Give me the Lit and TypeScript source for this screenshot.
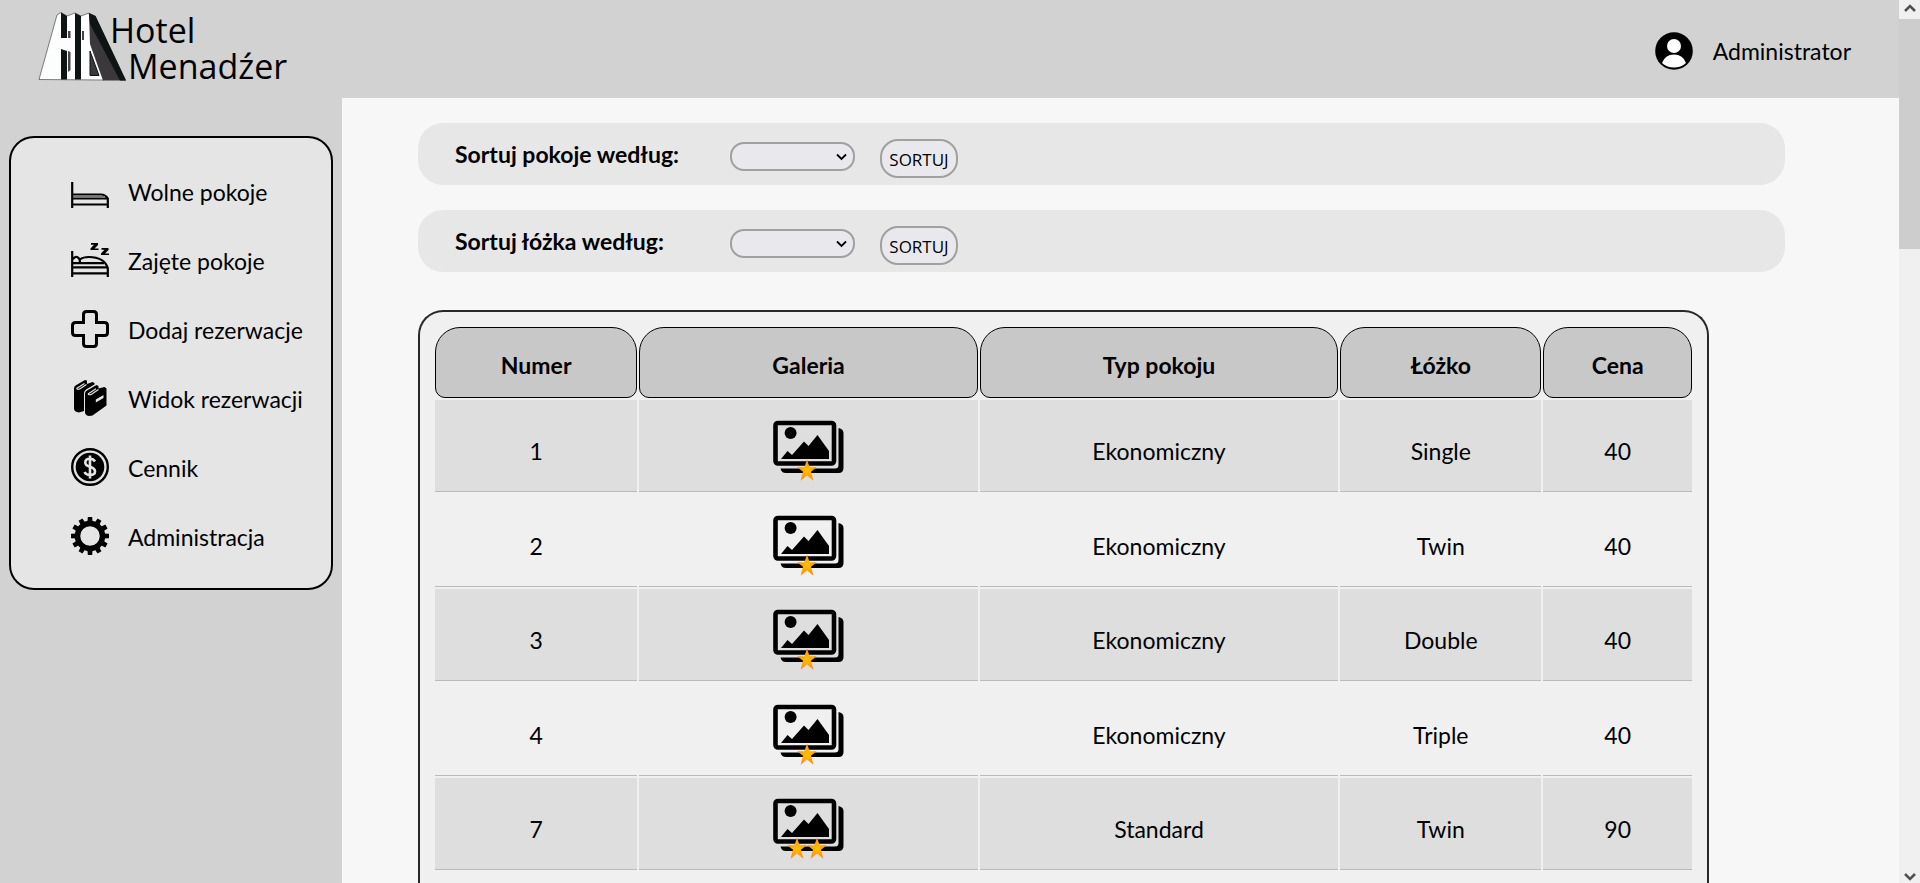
import { LitElement, html, css, svg } from "lit";
import { customElement } from "lit/decorators.js";

interface Room {
  number: number;
  type: string;
  bed: string;
  price: number;
  stars: number;
}

const ROOMS: Room[] = [
  { number: 1, type: "Ekonomiczny", bed: "Single", price: 40, stars: 1 },
  { number: 2, type: "Ekonomiczny", bed: "Twin", price: 40, stars: 1 },
  { number: 3, type: "Ekonomiczny", bed: "Double", price: 40, stars: 1 },
  { number: 4, type: "Ekonomiczny", bed: "Triple", price: 40, stars: 1 },
  { number: 7, type: "Standard", bed: "Twin", price: 90, stars: 2 },
];

const bedIcon = svg`
  <path d="M1.2 10V36M1.2 22.500H30Q34.500 22.500 36.800 26.500V36M1.2 26.500H36.800M1.2 32.500H36.800" fill="none" stroke="#000" stroke-width="2.200"/>
  <path d="M2 24.500H34" stroke="#777" stroke-width="1"/>`;

const sleepIcon = svg`
  <path d="M1.2 10V36M1.2 22.200H33M1.2 26.300H36.800M1.2 32.300H36.800M36.800 36V27Q33 16 18 16Q12 16 9 18.500M2 18Q5 14 8 17.500Q9.500 19.500 8.500 22" fill="none" stroke="#000" stroke-width="2.200"/>
  <path d="M20 2H27V4L23.500 7.500H27.500V9H19.500V7.500L23 3.800H20ZM30.500 7H37.500V9L34 12.500H38V14H30V12.500L33.500 8.800H30.500Z"/>`;

const plusIcon = svg`
  <path d="M15.500 1.500H22.500Q25.500 1.500 25.500 4.500V12.500H33.500Q36.500 12.500 36.500 15.500V22.500Q36.500 25.500 33.500 25.500H25.500V33.500Q25.500 36.500 22.500 36.500H15.500Q12.500 36.500 12.500 33.500V25.500H4.500Q1.500 25.500 1.500 22.500V15.500Q1.500 12.500 4.500 12.500H12.500V4.500Q12.500 1.500 15.500 1.500Z" fill="none" stroke="#000" stroke-width="3"/>`;

const booksIcon = svg`
  <path d="M3 9Q3 7.500 4.500 6.500L14 1L16 1.500V5L21.500 3L23.500 4V5.500L15 10.500Q13 12 13 14V32L8 33.500Q3 33 3 29.500Z"/>
  <path d="M14 14.500Q14 12.500 16 11.500L25.500 6L27.500 7V9.500L33.500 8L35.500 9.500V26.500L21.500 36.500Q14.500 38 14 33.500Z"/>
  <path d="M5.500 9.500Q7 10.800 9 9.800L15.500 5.500M5.500 9.500L13.500 4.500M17 15Q18.500 16.300 20.500 15.300L27.500 10.500M17 15L25 9.800" fill="none" stroke="#e5e5e5" stroke-width="1.200"/>
  <path d="M24.800 20.500L32.500 16V19L24.800 23.500Z" fill="#e5e5e5"/>`;

const coinIcon = svg`
  <circle cx="19" cy="19" r="17.800" fill="none" stroke="#000" stroke-width="2.400"/>
  <circle cx="19" cy="19" r="14.300"/>
  <path d="M24 13.500Q22.500 10.800 19 10.800Q14.300 10.800 14.300 14.500Q14.300 17.500 19 18.800Q24 20.300 24 23.500Q24 27 19 27Q15 27 13.500 24M19 7.500V30.500" fill="none" stroke="#e5e5e5" stroke-width="2.600"/>`;

const gearIcon = svg`
  <circle cx="19" cy="19" r="12.500" fill="none" stroke="#000" stroke-width="5.500"/>
  ${Array.from({ length: 12 }, (_, i) => svg`<path d="M16.800 0H21.200L21.600 6H16.400Z" transform="rotate(${i * 30} 19 19)"/>`)}`;

const MENU = [
  { label: "Wolne pokoje", icon: bedIcon },
  { label: "Zajęte pokoje", icon: sleepIcon },
  { label: "Dodaj rezerwacje", icon: plusIcon },
  { label: "Widok rezerwacji", icon: booksIcon },
  { label: "Cennik", icon: coinIcon },
  { label: "Administracja", icon: gearIcon },
];

const STAR = "M0 -11L2.600 -3.200H9.800L4 1.200L6.400 10.200L0 5L-6.400 10.200L-4 1.200L-9.800 -3.200H-2.600Z";

@customElement("app-root")
export class AppRoot extends LitElement {
  static styles = css`
    :host {
      display: flex;
      height: 100vh;
      overflow: hidden;
      background: #d2d2d2;
      color: #000;
      font-family: Lato, "Noto Sans", sans-serif;
      font-size: 23px;
      line-height: 28px;
    }
    * {
      box-sizing: border-box;
    }
    svg {
      display: block;
    }
    a {
      color: inherit;
      text-decoration: none;
    }
    .page {
      flex: 1;
      display: flex;
      flex-direction: column;
      min-width: 0;
    }
    .header {
      display: flex;
      justify-content: space-between;
      align-items: flex-start;
      height: 98px;
      padding: 8px 48px 0 36px;
    }
    .brand {
      font-family: "Open Sans", "Noto Sans", sans-serif;
      font-size: 34px;
    }
    .user {
      display: flex;
      align-items: center;
      gap: 20px;
      padding-top: 24px;
    }
    .body {
      flex: 1;
      display: flex;
      min-height: 0;
    }
    .side {
      width: 342px;
      padding: 38px 9px 0;
    }
    .menu {
      margin: 0;
      padding: 18px 0 18px 60px;
      list-style: none;
      border: 2px double #000;
      border-radius: 25px;
      background: #e5e5e5;
    }
    .menu-link {
      display: flex;
      align-items: center;
      gap: 19px;
      height: 69px;
    }
    .menu-text {
      padding-top: 2px;
    }
    .main {
      flex: 1;
      display: flex;
      flex-direction: column;
      min-width: 0;
      padding: 25px 114px 0 76px;
      background: #f7f7f7;
    }
    .sort {
      display: flex;
      align-items: center;
      height: 62px;
      flex: none;
      margin-bottom: 25px;
      padding: 9px 37px 0;
      border-radius: 25px;
      background: #e7e7e7;
    }
    .sort-label {
      width: 275px;
      padding-bottom: 9px;
      font-weight: 700;
    }
    .picker {
      position: relative;
      margin: 0 25px 4px 0;
    }
    .picker-select {
      display: block;
      width: 125px;
      height: 29px;
      appearance: none;
      border: 2px solid #a0a0a0;
      border-radius: 14px;
      background: #e9e9ed;
      font: inherit;
    }
    .picker-arrow {
      position: absolute;
      right: 8px;
      top: 11px;
      pointer-events: none;
    }
    .sort-button {
      width: 78px;
      height: 39px;
      padding: 1px 0 0;
      border: 2px solid #a0a0a0;
      border-radius: 18px;
      background: #e9e9ed;
      color: #000;
      font-family: "Open Sans", "Noto Sans", sans-serif;
      font-size: 17px;
    }
    .card {
      flex: 1;
      min-height: 0;
      margin: 13px 76px 0 0;
      padding: 13px;
      border: 2px double #282828;
      border-bottom: 0;
      border-radius: 25px 25px 0 0;
      background: #f0f0f0;
    }
    .rooms {
      width: 100%;
      table-layout: fixed;
      border-collapse: separate;
      border-spacing: 2px;
      text-align: center;
    }
    .col-number {
      width: 16.2%;
    }
    .col-gallery {
      width: 27.1%;
    }
    .col-type {
      width: 28.7%;
    }
    .col-bed {
      width: 16.1%;
    }
    .head-cell {
      height: 71px;
      padding: 4px 0 0;
      border: 1px double #000;
      border-radius: 25px 25px 10px 10px;
      background: #c8c8c8;
      font-weight: 700;
    }
    .cell {
      height: 92px;
      padding: 20px 0 9px;
      border-bottom: 1px solid #bababa;
    }
    .row:nth-child(odd) .cell {
      background: #dedede;
    }
    .row:nth-child(even) .cell {
      height: 93px;
    }
    .gallery {
      display: inline-block;
      vertical-align: top;
    }
    .scroll {
      width: 21px;
      display: flex;
      flex-direction: column;
      align-items: center;
      background: #f0f0f0;
    }
    .scroll-arrow {
      height: 19px;
      padding-top: 3px;
    }
    .scroll-thumb {
      width: 100%;
      height: 26%;
      margin-bottom: auto;
      background: #cdcdcd;
    }
  `;

  private sortBar(id: string, label: string) {
    return html`
      <form class="sort" @submit=${(e: Event) => e.preventDefault()}>
        <label class="sort-label" for=${id}>${label}</label>
        <span class="picker">
          <select class="picker-select" id=${id}><option></option></select>
          <svg class="picker-arrow" width="11" height="8" viewBox="0 0 11 8"><path d="M1 1.500L5.500 6L10 1.500" fill="none" stroke="#000" stroke-width="1.800"/></svg>
        </span>
        <button class="sort-button">SORTUJ</button>
      </form>`;
  }

  private galleryIcon(stars: number) {
    const centres = stars === 1 ? [34] : [24, 44];
    return html`
      <svg width="71" height="62" viewBox="0 0 71 62">
        <defs>
          <radialGradient id="gold"><stop offset="0" stop-color="#ffc400"/><stop offset="1" stop-color="#ff8c0a"/></radialGradient>
        </defs>
        <path d="M65.500 8Q70.500 9 70.500 13V48Q70.500 53 65.500 53H13Q8.500 53 7.500 48.500H62Q65.500 48.500 65.500 45Z"/>
        <rect x="2.500" y="3" width="58.500" height="40.500" rx="2.500" fill="none" stroke="#000" stroke-width="4.600"/>
        <circle cx="17.600" cy="13" r="6"/>
        <path d="M8 39L14.500 31L19 35L31 21.500L35.500 26L44.500 15L56 31V39Z"/>
        ${centres.map((x) => svg`<path d=${STAR} transform="translate(${x} 50.500)" fill="url(#gold)"/>`)}
      </svg>`;
  }

  render() {
    return html`
      <div class="page">
        <header class="header">
          <a href="#" aria-label="Hotel Menadźer">
            <svg class="brand" width="260" height="80" viewBox="36 8 260 80">
              <path d="M39 79.500L57 15L61 12.500L67 16L75 13L81 16L89 13L104 80Z" fill="#fdfdfd" stroke="#333" stroke-width=".6"/>
              <path d="M61 12.500L67 16V38H61ZM61 49L67 51V79.500H61ZM75 13L81 16V79.500H75Z" fill="#0e1413"/>
              <path d="M68 31H70.500V38H68ZM68 51L70.500 52V70L68 72ZM82 31H84V40H82Z" fill="#444"/>
              <path d="M89 13L95.500 16L126 80.500H103L90 44Z" fill="#3a383b"/>
              <path d="M89 13L95.500 16L126 80.500H120L90 24Z" fill="#0e1413"/>
              <path d="M90 51L99 75.500H90Z" fill="#3a383b" stroke="#0e1413" stroke-width="1"/>
              <text x="110" y="43">Hotel</text>
              <text x="128" y="79">Menadźer</text>
            </svg>
          </a>
          <a class="user" href="#">
            <svg width="38" height="38" viewBox="0 0 38 38">
              <circle cx="19" cy="19" r="18.800"/>
              <circle cx="19" cy="14" r="7" fill="#fff"/>
              <path d="M7 31Q10 22.500 19 22.500Q28 22.500 31 31Q26 35.500 19 35.500Q12 35.500 7 31Z" fill="#fff"/>
            </svg>
            <span>Administrator</span>
          </a>
        </header>
        <div class="body">
          <nav class="side">
            <ul class="menu">
              ${MENU.map((item) => html`
                <li>
                  <a class="menu-link" href="#">
                    <svg width="38" height="38" viewBox="0 0 38 38">${item.icon}</svg>
                    <span class="menu-text">${item.label}</span>
                  </a>
                </li>`)}
            </ul>
          </nav>
          <main class="main">
            ${this.sortBar("sort-rooms", "Sortuj pokoje według:")}
            ${this.sortBar("sort-beds", "Sortuj łóżka według:")}
            <section class="card">
              <table class="rooms">
                <colgroup>
                  <col class="col-number" /><col class="col-gallery" /><col class="col-type" /><col class="col-bed" /><col />
                </colgroup>
                <thead>
                  <tr>
                    ${["Numer", "Galeria", "Typ pokoju", "Łóżko", "Cena"].map((h) => html`<th class="head-cell" scope="col">${h}</th>`)}
                  </tr>
                </thead>
                <tbody>
                  ${ROOMS.map((room) => html`
                    <tr class="row">
                      <td class="cell">${room.number}</td>
                      <td class="cell"><a class="gallery" href="#" aria-label="Galeria">${this.galleryIcon(room.stars)}</a></td>
                      <td class="cell">${room.type}</td>
                      <td class="cell">${room.bed}</td>
                      <td class="cell">${room.price}</td>
                    </tr>`)}
                </tbody>
              </table>
            </section>
          </main>
        </div>
      </div>
      <div class="scroll">
        <svg class="scroll-arrow" width="12" height="19" viewBox="0 0 12 16"><path d="M1 8L6 3L11 8" fill="none" stroke="#505050" stroke-width="2.500"/></svg>
        <div class="scroll-thumb"></div>
        <svg class="scroll-arrow" width="12" height="19" viewBox="0 0 12 16"><path d="M1 7L6 12L11 7" fill="none" stroke="#505050" stroke-width="2.500"/></svg>
      </div>
    `;
  }
}
